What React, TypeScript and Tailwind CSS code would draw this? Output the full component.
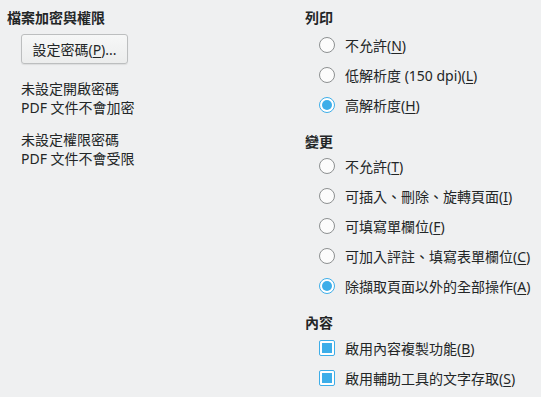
const FONT = "font-['Noto_Sans','Noto_Sans_CJK_TC',sans-serif]";

function Mnemonic({ text, k }: { text: string; k: string }) {
  return (
    <span>
      {text}(<span className="underline underline-offset-2">{k}</span>)
    </span>
  );
}

function Header({ children }: { children: React.ReactNode }) {
  return (
    <div className="flex h-[20px] items-center text-[14px] font-bold text-[#232627]">
      {children}
    </div>
  );
}

function Radio({ checked, text, k }: { checked?: boolean; text: string; k: string }) {
  return (
    <div className="flex h-[30px] items-center gap-[10px] pl-[14px]">
      {checked ? (
        <span className="flex h-[16px] w-[16px] items-center justify-center rounded-full border border-[#3daee9] bg-white">
          <span className="h-[10px] w-[10px] rounded-full bg-[#3daee9]" />
        </span>
      ) : (
        <span className="h-[16px] w-[16px] rounded-full border border-[#8d9091] bg-[#fcfcfc]" />
      )}
      <Mnemonic text={text} k={k} />
    </div>
  );
}

function Check({ text, k }: { text: string; k: string }) {
  return (
    <div className="flex h-[30px] items-center gap-[10px] pl-[14px]">
      <span className="flex h-[16px] w-[16px] items-center justify-center rounded-[2px] border border-[#3daee9] bg-white">
        <span className="h-[10px] w-[10px] bg-[#3daee9]" />
      </span>
      <Mnemonic text={text} k={k} />
    </div>
  );
}

export default function App() {
  return (
    <div
      className={`${FONT} flex h-[397px] w-[541px] bg-[#eff0f1] pl-[7px] pt-[7px] text-[14px] text-[#232627]`}
    >
      <div className="w-[298px]">
        <Header>檔案加密與權限</Header>
        <div className="pl-[14px] pt-[7px]">
          <button className="flex h-[30px] w-[107px] items-center justify-center rounded-[3px] border border-[#bcbebf] bg-gradient-to-b from-[#f6f7f7] to-[#eceded] text-[#232627] shadow-[0_1px_1px_rgba(0,0,0,0.08)]">
            <span>
              設定密碼(<span className="underline underline-offset-2">P</span>)...
            </span>
          </button>
          <div className="mt-[15px] leading-[19px]">
            <div>未設定開啟密碼</div>
            <div>PDF 文件不會加密</div>
          </div>
          <div className="mt-[13px] leading-[19px]">
            <div>未設定權限密碼</div>
            <div>PDF 文件不會受限</div>
          </div>
        </div>
      </div>
      <div className="flex-1">
        <Header>列印</Header>
        <div className="h-[3px]" />
        <Radio text="不允許" k="N" />
        <Radio text="低解析度 (150 dpi)" k="L" />
        <Radio checked text="高解析度" k="H" />
        <div className="h-[11px]" />
        <Header>變更</Header>
        <Radio text="不允許" k="T" />
        <Radio text="可插入、刪除、旋轉頁面" k="I" />
        <Radio text="可填寫單欄位" k="F" />
        <Radio text="可加入評註、填寫表單欄位" k="C" />
        <Radio checked text="除擷取頁面以外的全部操作" k="A" />
        <div className="h-[11px]" />
        <Header>內容</Header>
        <div className="h-[1px]" />
        <Check text="啟用內容複製功能" k="B" />
        <Check text="啟用輔助工具的文字存取" k="S" />
      </div>
    </div>
  );
}
